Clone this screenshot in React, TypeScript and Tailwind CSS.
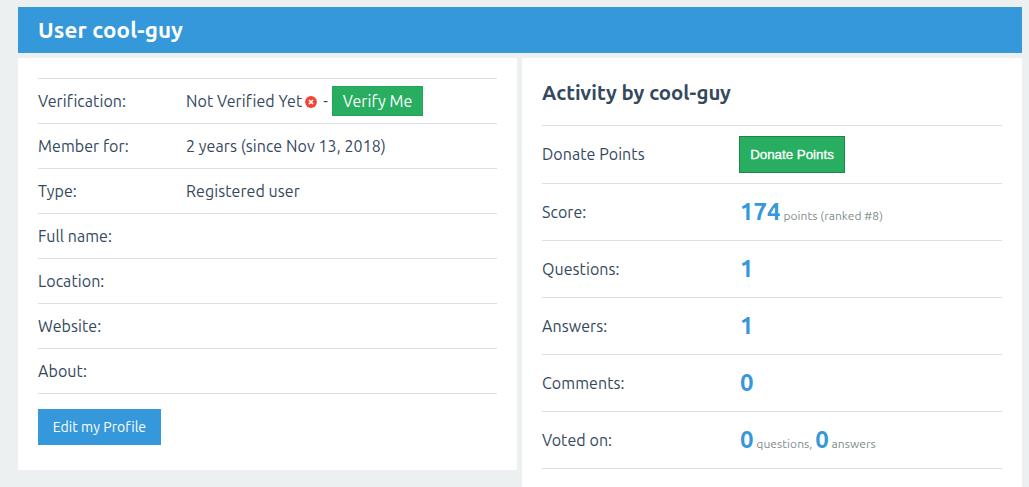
import type { ReactNode } from 'react';

function ProfileRow({ label, children }: { label: string; children?: ReactNode }) {
  return (
    <div className="flex h-[45px] items-center border-b border-[#dddfe0]">
      <dt className="w-[148px] shrink-0">{label}</dt>
      <dd className="flex items-center whitespace-pre">{children}</dd>
    </div>
  );
}

function ActivityRow({ label, children }: { label: string; children: ReactNode }) {
  return (
    <div className="flex h-[57px] items-center border-b border-[#dddfe0]">
      <dt className="w-[198px] shrink-0">{label}</dt>
      <dd className="flex items-baseline whitespace-pre">{children}</dd>
    </div>
  );
}

function Count({ children }: { children: ReactNode }) {
  return <span className="text-[24px] leading-[30px] font-bold tracking-normal text-[#3498db]">{children}</span>;
}

function Note({ children }: { children: ReactNode }) {
  return <span className="text-[12px] leading-none tracking-[0.06px] text-[#7f8c8d]">{children}</span>;
}

export default function App() {
  return (
    <div className="h-[487px] overflow-hidden bg-[#ecf0f1] pt-[7px] pr-[7px] pl-[18px] font-['Ubuntu','Noto_Sans',sans-serif] text-[16px] text-[#34495e]">
      <header className="flex h-[46px] items-center bg-[#3498db] pb-px pl-5">
        <h1 className="text-[22.4px] font-bold tracking-[0.13px] text-white">User cool-guy</h1>
      </header>
      <main className="mt-[5px] flex items-start gap-[5px]">
        <section className="h-[412px] w-[499px] bg-white p-5">
          <dl className="border-t border-[#dddfe0] tracking-[0.07px]">
            <ProfileRow label="Verification:">
              <span>Not Verified Yet</span>
              <svg viewBox="0 0 12 12" className="mt-px ml-[3px] size-3" aria-hidden="true">
                <circle cx="6" cy="6" r="5.9" fill="#f44336" />
                <path d="M4 4l4 4M8 4l-4 4" stroke="white" strokeWidth="1.7" />
              </svg>
              <span className="mr-[4px] ml-[6px]">-</span>
              <button className="h-[30px] w-[91px] border border-[#27a25a] bg-[#27ae60] text-center text-white">Verify Me</button>
            </ProfileRow>
            <ProfileRow label="Member for:">2 years (since Nov 13, 2018)</ProfileRow>
            <ProfileRow label="Type:">Registered user</ProfileRow>
            <ProfileRow label="Full name:" />
            <ProfileRow label="Location:" />
            <ProfileRow label="Website:" />
            <ProfileRow label="About:" />
          </dl>
          <button className="mt-[15px] h-9 w-[123px] bg-[#3498db] text-[14px] tracking-[0.05px] text-white">Edit my Profile</button>
        </section>
        <section className="h-[440px] w-[500px] bg-white px-5">
          <h2 className="flex h-[67px] items-center pt-[4px] text-[20.4px] font-bold">Activity by cool-guy</h2>
          <dl className="border-t border-[#dddfe0] tracking-[0.07px]">
            <div className="flex h-[58px] items-center border-b border-[#dddfe0]">
              <dt className="w-[197px] pb-px">Donate Points</dt>
              <dd>
                <button className="block h-[37px] w-[106px] border border-[#1e8449] bg-[#27ae60] font-['Liberation_Sans',Arial,sans-serif] text-[13.33px] tracking-normal text-white [-webkit-text-stroke:0.3px_white]">Donate Points</button>
              </dd>
            </div>
            <ActivityRow label="Score:"><Count>174</Count><Note> points (ranked #8)</Note></ActivityRow>
            <ActivityRow label="Questions:"><Count>1</Count></ActivityRow>
            <ActivityRow label="Answers:"><Count>1</Count></ActivityRow>
            <ActivityRow label="Comments:"><Count>0</Count></ActivityRow>
            <ActivityRow label="Voted on:"><Count>0</Count><Note> questions, </Note><Count>0</Count><Note> answers</Note></ActivityRow>
          </dl>
        </section>
      </main>
    </div>
  );
}
